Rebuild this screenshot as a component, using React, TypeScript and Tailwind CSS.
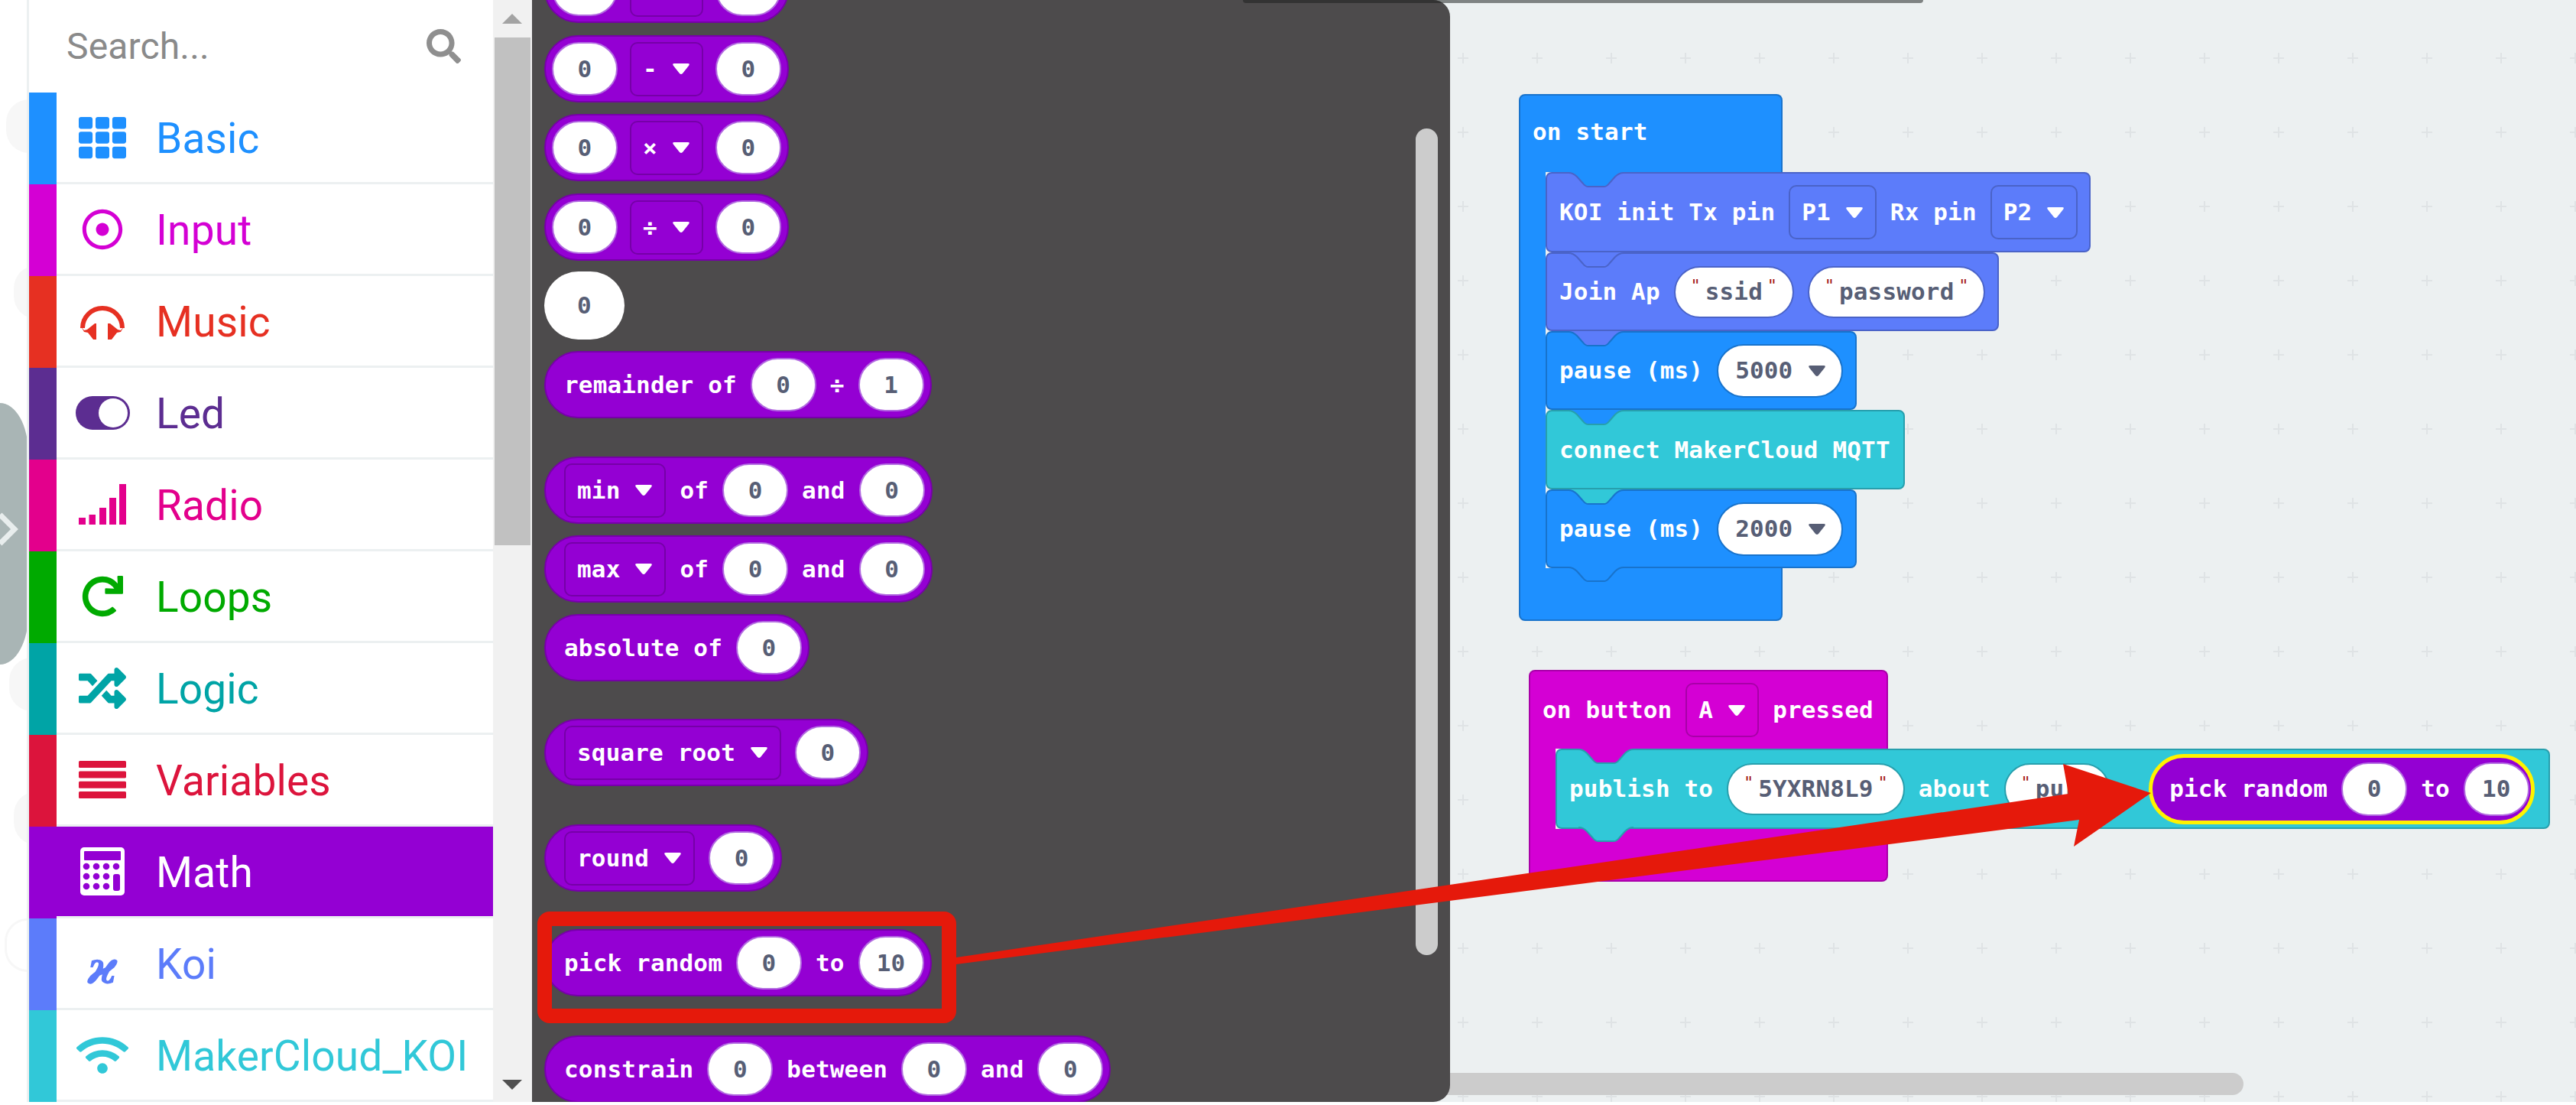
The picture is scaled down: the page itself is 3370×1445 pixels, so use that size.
import type { ReactNode } from 'react'
import { FaTh, FaRegDotCircle, FaRedo, FaRandom, FaWifi, FaSearch } from 'react-icons/fa'

function Headphones({ color }: { color: string }) {
  return (
    <svg width="58" height="49" viewBox="0 0 58 49" fill={color}>
      <path d="M3 34 A26 26 0 1 1 55 34" fill="none" stroke={color} strokeWidth="6" />
      <path d="M1 32 L5 37 L9 36 L19 28 L21 28 V49 L17 49 L10 40 L5 39 Z" />
      <path d="M57 32 L53 37 L49 36 L39 28 L36 28 V49 L41 49 L48 40 L53 39 Z" />
    </svg>
  )
}

function Toggle() {
  return (
    <div className="flex h-[44px] w-[71px] items-center justify-end rounded-full bg-[#5c2d91] pr-[3px]">
      <div className="h-[38px] w-[38px] rounded-full bg-white" />
    </div>
  )
}

function SignalBars({ color }: { color: string }) {
  return (
    <svg width="62" height="53" viewBox="0 0 62 53" fill={color}>
      <rect x="0" y="44" width="9" height="9" />
      <rect x="13.5" y="40" width="8.5" height="13" />
      <rect x="27" y="31" width="9" height="22" />
      <rect x="40" y="18" width="9" height="35" />
      <rect x="53" y="0" width="9" height="53" />
    </svg>
  )
}

function VariableBars({ color }: { color: string }) {
  return (
    <svg width="62" height="49" viewBox="0 0 62 49" fill={color}>
      <rect x="0" y="0" width="62" height="9" rx="1.5" />
      <rect x="0" y="13.4" width="62" height="9" rx="1.5" />
      <rect x="0" y="26.8" width="62" height="9" rx="1.5" />
      <rect x="0" y="40" width="62" height="9" rx="1.5" />
    </svg>
  )
}

function Calculator() {
  const dots = [
    [12, 26], [25, 26], [38, 26], [51, 26],
    [12, 39], [25, 39], [38, 39],
    [12, 52], [25, 52], [38, 52],
  ]
  return (
    <svg width="58" height="63" viewBox="0 0 58 63">
      <rect x="0" y="0" width="58" height="63" rx="5" fill="#ffffff" />
      <rect x="5" y="5" width="48" height="12" rx="1" fill="#9400d3" />
      {dots.map(([x, y]) => (
        <circle key={`${x}-${y}`} cx={x - 4} cy={y - 1} r="4.3" fill="#9400d3" />
      ))}
      <rect x="43" y="35" width="9" height="22" rx="3" fill="#9400d3" />
    </svg>
  )
}

const categories: { name: string; color: string; icon: ReactNode }[] = [
  { name: 'Basic', color: '#1e90ff', icon: <FaTh size={62} color="#1e90ff" /> },
  { name: 'Input', color: '#d400d4', icon: <FaRegDotCircle size={54} color="#d400d4" /> },
  { name: 'Music', color: '#e63022', icon: <Headphones color="#e63022" /> },
  { name: 'Led', color: '#5c2d91', icon: <Toggle /> },
  { name: 'Radio', color: '#e3008c', icon: <SignalBars color="#e3008c" /> },
  { name: 'Loops', color: '#00aa00', icon: <FaRedo size={54} color="#00aa00" /> },
  { name: 'Logic', color: '#00a4a6', icon: <FaRandom size={62} color="#00a4a6" /> },
  { name: 'Variables', color: '#dc143c', icon: <VariableBars color="#dc143c" /> },
  { name: 'Math', color: '#9400d3', icon: <Calculator /> },
  { name: 'Koi', color: '#5c7cfa', icon: <span className="pt-[10px] font-['DejaVu_Serif',serif] text-[60px] font-bold italic leading-none text-[#5c7cfa]">ϰ</span> },
  { name: 'MakerCloud_KOI', color: '#31c8d8', icon: <FaWifi size={68} color="#31c8d8" /> },
]

function CategoryRow({ name, color, icon }: { name: string; color: string; icon: ReactNode }) {
  const selected = name === 'Math'
  return (
    <div className="flex h-[120px]">
      <div className="w-[36px]" style={{ backgroundColor: color }} />
      <div
        className={`flex flex-1 items-center border-b-[3px] ${selected ? 'border-[#ecf0f1] bg-[#9400d3] text-white' : 'border-[#ecf0f1]'}`}
        style={selected ? undefined : { color }}
      >
        <div className="flex w-[120px] items-center justify-center">{icon}</div>
        <span className="ml-[10px] pt-[3px] font-['Roboto',sans-serif] text-[55px] font-normal leading-none">{name}</span>
      </div>
    </div>
  )
}

function Sidebar() {
  return (
    <div className="flex h-[1441px] w-[607px] flex-col bg-white">
      <div className="flex h-[121px] items-center justify-between pl-[49px] pr-[42px]">
        <span className="font-['Roboto',sans-serif] text-[48px] font-normal leading-none text-[#8a8a8a]">Search...</span>
        <FaSearch size={45} color="#8f8f8f" />
      </div>
      {categories.map((c) => (
        <CategoryRow key={c.name} {...c} />
      ))}
    </div>
  )
}

function SideScrollbar() {
  return (
    <div className="relative h-[1441px] w-[51px] bg-[#f1f1f1]">
      <div className="absolute left-[12px] top-[18px] h-0 w-0 border-x-[13px] border-b-[13px] border-x-transparent border-b-[#a3a3a3]" />
      <div className="absolute left-[2px] top-[49px] h-[664px] w-[47px] bg-[#c1c1c1]" />
      <div className="absolute left-[12px] top-[1412px] h-0 w-0 border-x-[13px] border-t-[13px] border-x-transparent border-t-[#505050]" />
    </div>
  )
}

function Caret({ color = '#ffffff' }: { color?: string }) {
  return (
    <svg width="24" height="16" viewBox="0 0 24 16" className="shrink-0">
      <path d="M3 1 H21 Q24 1 22 4 L14 14 Q12 16 10 14 L2 4 Q0 1 3 1 Z" fill={color} />
    </svg>
  )
}

function Dropdown({ label, border }: { label: string; border: string }) {
  return (
    <div className="flex h-[71px] shrink-0 items-center gap-[19px] rounded-[10px] border-2 px-[15px]" style={{ borderColor: border }}>
      <span className="whitespace-pre">{label}</span>
      <Caret />
    </div>
  )
}

function Pill({ value, border = '#b26be0' }: { value: string; border?: string }) {
  return (
    <div className="flex h-[70px] w-[86px] shrink-0 items-center justify-center rounded-full border-2 bg-white text-[#575e75]" style={{ borderColor: border }}>
      {value}
    </div>
  )
}

function StringPill({ value, border }: { value: string; border: string }) {
  return (
    <div className="flex h-[68px] shrink-0 items-center gap-[8px] rounded-full border-2 bg-white px-[22px] text-[#575e75]" style={{ borderColor: border }}>
      <span className="mb-[16px] flex w-[9px] justify-center text-[22px] font-normal text-[#a31515]">"</span>
      <span>{value}</span>
      <span className="mb-[16px] flex w-[9px] justify-center text-[22px] font-normal text-[#a31515]">"</span>
    </div>
  )
}

function MathBlock({ className, children }: { className: string; children: ReactNode }) {
  return (
    <div className={`flex h-[88px] w-fit shrink-0 items-center rounded-full border-2 border-[#7600a8] bg-[#9400d3] text-white ${className}`}>
      {children}
    </div>
  )
}

const dd = '#7600a8'

function OperatorBlock({ op, className }: { op: string; className: string }) {
  return (
    <MathBlock className={`gap-[16px] pl-[8px] pr-[8px] ${className}`}>
      <Pill value="0" />
      <Dropdown label={op} border={dd} />
      <Pill value="0" />
    </MathBlock>
  )
}

function Flyout() {
  return (
    <div className="relative z-10 flex h-[1441px] w-[1201px] shrink-0 flex-col overflow-hidden rounded-r-[22px] bg-[#4d4b4c] pl-[16px]">
      <div className="absolute left-[930px] top-0 h-[4px] w-[280px] rounded-bl-[8px] bg-[#333333]" />
      <OperatorBlock op="+" className="-mt-[58px]" />
      <OperatorBlock op="-" className="mt-[16px]" />
      <OperatorBlock op="×" className="mt-[15px]" />
      <OperatorBlock op="÷" className="mt-[16px]" />
      <div className="mt-[14px] flex h-[89px] w-[105px] shrink-0 items-center justify-center rounded-full bg-white text-[#575e75]">0</div>
      <MathBlock className="mt-[15px] gap-[18px] pl-[24px] pr-[8px]">
        <span className="whitespace-pre">remainder of</span>
        <Pill value="0" />
        <span>÷</span>
        <Pill value="1" />
      </MathBlock>
      <MathBlock className="mt-[50px] gap-[18px] pl-[24px] pr-[8px]">
        <Dropdown label="min" border={dd} />
        <span>of</span>
        <Pill value="0" />
        <span>and</span>
        <Pill value="0" />
      </MathBlock>
      <MathBlock className="mt-[15px] gap-[18px] pl-[24px] pr-[8px]">
        <Dropdown label="max" border={dd} />
        <span>of</span>
        <Pill value="0" />
        <span>and</span>
        <Pill value="0" />
      </MathBlock>
      <MathBlock className="mt-[15px] gap-[18px] pl-[24px] pr-[8px]">
        <span className="whitespace-pre">absolute of</span>
        <Pill value="0" />
      </MathBlock>
      <MathBlock className="mt-[49px] gap-[18px] pl-[24px] pr-[8px]">
        <Dropdown label="square root" border={dd} />
        <Pill value="0" />
      </MathBlock>
      <MathBlock className="mt-[50px] gap-[18px] pl-[24px] pr-[8px]">
        <Dropdown label="round" border={dd} />
        <Pill value="0" />
      </MathBlock>
      <MathBlock className="mt-[49px] gap-[18px] pl-[24px] pr-[8px]">
        <span className="whitespace-pre">pick random</span>
        <Pill value="0" />
        <span>to</span>
        <Pill value="10" />
      </MathBlock>
      <MathBlock className="mt-[51px] gap-[18px] pl-[24px] pr-[8px]">
        <span>constrain</span>
        <Pill value="0" />
        <span>between</span>
        <Pill value="0" />
        <span>and</span>
        <Pill value="0" />
      </MathBlock>
      <div className="absolute left-[1156px] top-[168px] h-[1081px] w-[29px] rounded-full bg-[#cccccc]" />
    </div>
  )
}

// tab of the block above, cut into the top edge of the block below
function Notch({ fill, stroke, className }: { fill: string; stroke: string; className: string }) {
  return (
    <svg width="72" height="21" viewBox="0 0 72 21" className={`absolute ${className}`}>
      <path d="M0 0 H72 V1 Q66 1 61 6 L53 15 Q50 19 46 19 H26 Q22 19 19 15 L11 6 Q6 1 0 1 Z" fill={fill} />
      <path d="M0 1 Q6 1 11 6 L19 15 Q22 19 26 19 H46 Q50 19 53 15 L61 6 Q66 1 72 1" fill="none" stroke={stroke} strokeWidth="2" />
    </svg>
  )
}

function StackBlock({ bg, border, notch, className, children }: { bg: string; border: string; notch: string; className: string; children: ReactNode }) {
  return (
    <div className={`relative flex items-center gap-[18px] rounded-[8px] border-2 pl-[16px] text-white ${className}`} style={{ backgroundColor: bg, borderColor: border }}>
      <Notch fill={notch} stroke={border} className="-top-[2px] left-[28px]" />
      {children}
    </div>
  )
}

const blue = '#1e90ff'
const blueDark = '#1873cc'
const koi = '#5c7cfa'
const koiDark = '#4a63c8'
const teal = '#31c8d8'
const tealDark = '#279fad'

function PausePill({ value }: { value: string }) {
  return (
    <div className="flex h-[70px] w-[165px] items-center gap-[20px] rounded-full border-2 border-[#1873cc] bg-white pl-[22px] text-[#575e75]">
      {value}
      <Caret color="#575e75" />
    </div>
  )
}

function OnStart() {
  return (
    <div className="absolute left-[120px] top-[123px] flex flex-col">
      <div className="flex h-[102px] w-[345px] items-center rounded-t-[8px] border-x-2 border-t-2 border-[#1873cc] bg-[#1e90ff] pb-[6px] pl-[16px] text-white">on start</div>
      <div className="flex">
        <div className="w-[35px] border-l-2 border-[#1873cc] bg-[#1e90ff]" />
        <div className="flex flex-col">
          <StackBlock bg={koi} border={koiDark} notch={blue} className="z-[1] h-[105px] w-[713px]">
            <span className="whitespace-pre">KOI init Tx pin</span>
            <Dropdown label="P1" border={koiDark} />
            <span className="whitespace-pre">Rx pin</span>
            <Dropdown label="P2" border={koiDark} />
          </StackBlock>
          <StackBlock bg={koi} border={koiDark} notch={koi} className="z-[2] h-[103px] w-[593px]">
            <span className="whitespace-pre">Join Ap</span>
            <StringPill value="ssid" border={koiDark} />
            <StringPill value="password" border={koiDark} />
          </StackBlock>
          <StackBlock bg={blue} border={blueDark} notch={koi} className="z-[3] h-[103px] w-[407px]">
            <span className="whitespace-pre">pause (ms)</span>
            <PausePill value="5000" />
          </StackBlock>
          <StackBlock bg={teal} border={tealDark} notch={blue} className="z-[4] h-[104px] w-[470px]">
            <span className="whitespace-pre">connect MakerCloud MQTT</span>
          </StackBlock>
          <StackBlock bg={blue} border={blueDark} notch={teal} className="z-[5] h-[103px] w-[407px]">
            <span className="whitespace-pre">pause (ms)</span>
            <PausePill value="2000" />
          </StackBlock>
        </div>
      </div>
      <div className="relative h-[69px] w-[345px] rounded-b-[8px] border-x-2 border-b-2 border-[#1873cc] bg-[#1e90ff]">
        <Notch fill={blue} stroke={blueDark} className="-top-[2px] left-[63px] z-[6]" />
      </div>
    </div>
  )
}

function OnButton() {
  return (
    <div className="absolute left-[133px] top-[876px] flex flex-col">
      <div className="flex h-[103px] w-[470px] items-center gap-[18px] rounded-t-[8px] border-x-2 border-t-2 border-[#a900a9] bg-[#d400d4] pl-[16px] text-white">
        <span className="whitespace-pre">on button</span>
        <Dropdown label="A" border="#a900a9" />
        <span>pressed</span>
      </div>
      <div className="flex">
        <div className="w-[35px] border-l-2 border-[#a900a9] bg-[#d400d4]" />
        <StackBlock bg={teal} border={tealDark} notch="#d400d4" className="z-[1] h-[105px] w-[1301px]">
          <span className="whitespace-pre">publish to</span>
          <StringPill value="5YXRN8L9" border={tealDark} />
          <span>about</span>
          <StringPill value="pur" border={tealDark} />
          <div className="ml-[33px] flex h-[92px] items-center gap-[18px] rounded-full border-[5px] border-[#fff200] bg-[#9400d3] pl-[22px] pr-[2px]">
            <span className="whitespace-pre">pick random</span>
            <Pill value="0" />
            <span>to</span>
            <Pill value="10" />
          </div>
          <Notch fill={teal} stroke={tealDark} className="-bottom-[20px] left-[28px]" />
        </StackBlock>
      </div>
      <div className="h-[69px] w-[470px] rounded-b-[8px] border-x-2 border-b-2 border-[#a900a9] bg-[#d400d4]" />
    </div>
  )
}

function Canvas() {
  return (
    <div className="relative -ml-[30px] h-[1441px] flex-1 overflow-hidden bg-[#ecf0f1]">
      <svg className="absolute inset-0 h-full w-full">
        <defs>
          <pattern id="plus" x="40" y="166" width="97" height="97" patternUnits="userSpaceOnUse">
            <path d="M7 0 V14 M0 7 H14" stroke="#dfe3e5" strokeWidth="2" />
          </pattern>
        </defs>
        <rect width="100%" height="100%" fill="url(#plus)" />
      </svg>
      <div className="absolute left-0 top-0 h-[4px] w-[649px] rounded-b-[8px] bg-[#7f8383]" />
      <OnStart />
      <OnButton />
      <div className="absolute left-0 top-[1403px] h-[29px] w-[1068px] rounded-r-full bg-[#cccccc]" />
    </div>
  )
}

export default function App() {
  return (
    <div className="relative flex h-[1445px] w-[3370px] overflow-hidden bg-white font-['DejaVu_Sans_Mono',monospace] text-[31px] font-bold leading-none tracking-[0.15px]">
      <div className="relative h-[1441px] w-[38px] shrink-0 overflow-hidden border-r-[3px] border-[#ecf0f1] bg-white">
        <div className="absolute left-[8px] top-[130px] h-[70px] w-[60px] rounded-full bg-[#f7f7f7]" />
        <div className="absolute left-[18px] top-[347px] h-[70px] w-[60px] rounded-full bg-[#f7f7f7]" />
        <div className="absolute left-[12px] top-[860px] h-[70px] w-[60px] rounded-full bg-[#f7f7f7]" />
        <div className="absolute left-[18px] top-[1035px] h-[70px] w-[60px] rounded-full bg-[#f7f7f7]" />
        <div className="absolute left-[6px] top-[1201px] h-[70px] w-[60px] rounded-full border-[3px] border-[#f7f7f7]" />
        <div className="absolute left-0 top-[527px] h-[342px] w-[37px] rounded-r-[37px_65px] bg-[#a9b5b5]" />
        <svg width="24" height="50" viewBox="0 0 24 50" className="absolute left-0 top-[667px]">
          <path d="M0 6 L19 25 L0 44" fill="none" stroke="#e8eded" strokeWidth="7" />
        </svg>
      </div>
      <Sidebar />
      <SideScrollbar />
      <Flyout />
      <Canvas />
      {/* annotation drawn over the screenshot */}
      <div className="absolute left-[703px] top-[1192px] z-20 h-[146px] w-[548px] rounded-[16px] border-[19px] border-[#e5190b]" />
      <svg className="absolute inset-0 z-20 h-full w-full">
        <polygon points="1251,1252 2706,1038 2699,999 2814,1037 2713,1107 2720,1072 1251,1261" fill="#e5190b" />
      </svg>
    </div>
  )
}
